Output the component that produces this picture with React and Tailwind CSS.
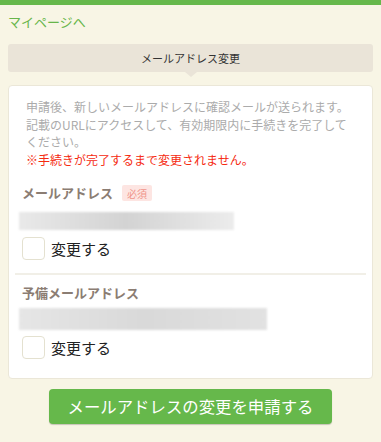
export default function App() {
  const font = { fontFamily: '"Noto Sans CJK JP", "Noto Sans", sans-serif' }

  const Checkbox = () => (
    <label className="flex items-center gap-[6px] ml-[3px]">
      <span className="w-[23px] h-[23px] rounded-[4px] border border-[#e4e1d0] bg-white" />
      <span className="text-[15px] leading-[20px] text-[#222]">変更する</span>
    </label>
  )

  return (
    <div className="w-[381px] h-[442px] bg-[#f8f5e5] overflow-hidden" style={font}>
      {/* top bar */}
      <div className="h-[5px] bg-[#66b84b]" />

      <div className="px-2">
        <a className="block pt-[7px] text-[13px] leading-[20px] text-[#67b54a]">マイページへ</a>

        {/* section header */}
        <div className="relative mt-[12px] h-[28px] rounded-[3px] bg-[#eae4d8] flex items-center justify-center">
          <span className="text-[11px] text-[#333]">メールアドレス変更</span>
          <span className="absolute left-1/2 -translate-x-1/2 top-full w-0 h-0 border-l-[6px] border-r-[6px] border-t-[5px] border-l-transparent border-r-transparent border-t-[#eae4d8]" />
        </div>

        {/* card */}
        <div className="mt-[13px] rounded-[4px] border border-[#ebe7d8] bg-white px-[10px] pt-[12px] pb-[19px]">
          <p className="pl-[7px] pr-[7px] text-[12px] leading-[17.5px] text-[#ababab]">
            申請後、新しいメールアドレスに確認メールが送られます。記載のURLにアクセスして、有効期限内に手続きを完了してください。
            <br />
            <span className="text-[#f52a10]">※手続きが完了するまで変更されません。</span>
          </p>

          <div className="mt-[15px] pl-[3px] flex items-center gap-[9px]">
            <span className="text-[13px] leading-[20px] font-bold text-[#8b7d73]">メールアドレス</span>
            <span className="h-[16px] px-[5px] flex items-center rounded-[2px] bg-[#fde5e2] text-[10px] text-[#f0958b]">必須</span>
          </div>
          <div className="mt-[9px] w-[215px] h-[18px] bg-linear-to-r from-[#e9e9e9] via-[#d3d3d3] to-[#ececec] blur-[1px]" />
          <div className="mt-[7px]">
            <Checkbox />
          </div>

          <div className="mt-[13px] -mx-[4px] h-[2px] bg-[#f1efe7]" />

          <div className="mt-[8px] pl-[3px] text-[13px] leading-[20px] font-bold text-[#8b7d73]">予備メールアドレス</div>
          <div className="mt-[5px] w-[248px] h-[22px] bg-linear-to-r from-[#e6e6e6] via-[#d9d9d9] to-[#e2e2e2] blur-[1px]" />
          <div className="mt-[6px]">
            <Checkbox />
          </div>
        </div>

        <div className="mt-[10px] flex justify-center">
          <button className="w-[283px] h-[35px] rounded-[4px] bg-[#66b84b] shadow-[0_1px_1px_rgba(0,0,0,0.2)] text-white text-[16.4px]">
            メールアドレスの変更を申請する
          </button>
        </div>
      </div>
    </div>
  )
}
